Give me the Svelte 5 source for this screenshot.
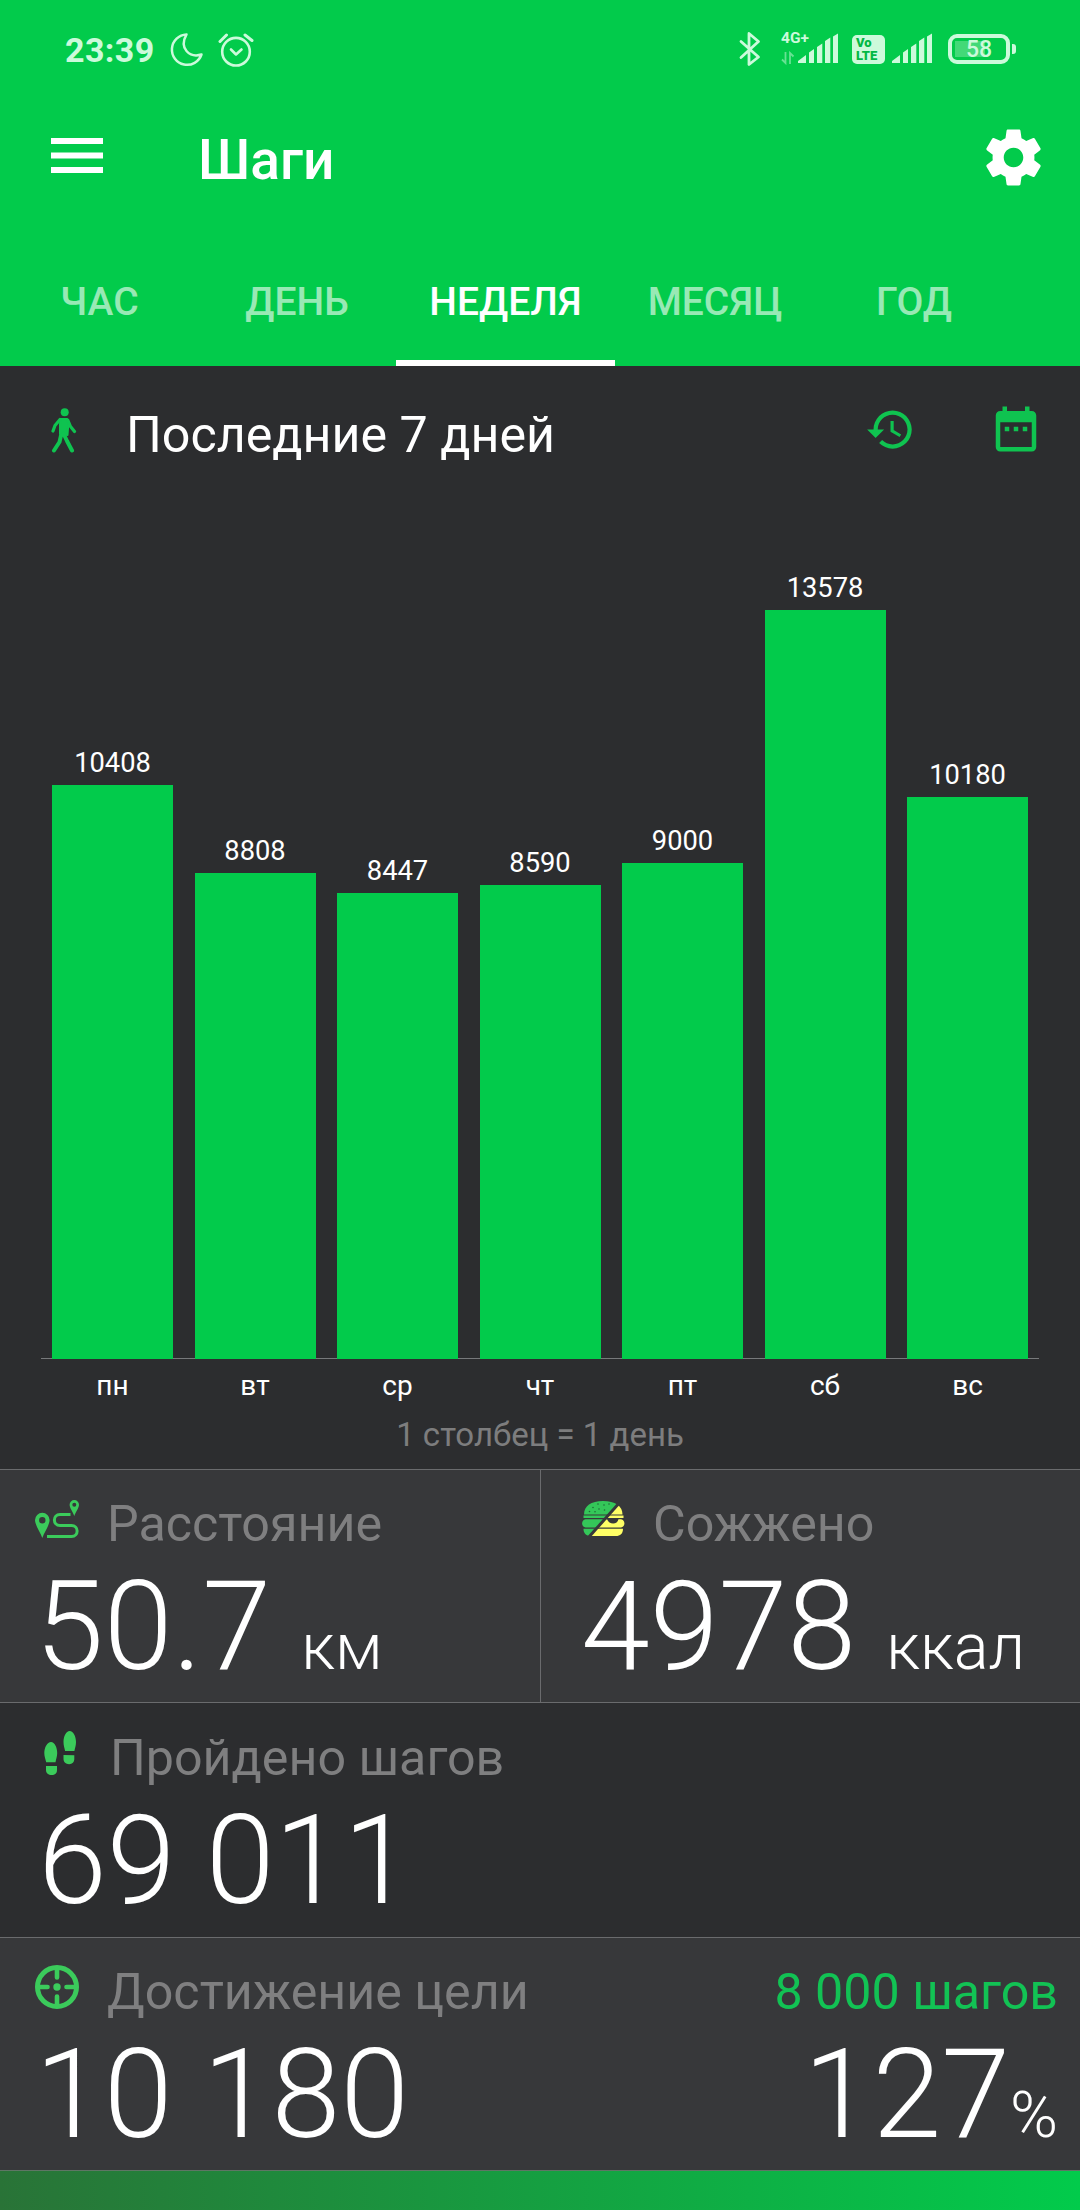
<script lang="ts">
  type Day = { name: string; steps: number };

  const tabs = ['ЧАС', 'ДЕНЬ', 'НЕДЕЛЯ', 'МЕСЯЦ', 'ГОД'];
  let active = $state('НЕДЕЛЯ');

  const days: Day[] = [
    { name: 'пн', steps: 10408 },
    { name: 'вт', steps: 8808 },
    { name: 'ср', steps: 8447 },
    { name: 'чт', steps: 8590 },
    { name: 'пт', steps: 9000 },
    { name: 'сб', steps: 13578 },
    { name: 'вс', steps: 10180 }
  ];

  const maxBar = 749;
  const maxSteps = Math.max(...days.map((d) => d.steps));
  const barHeight = (steps: number) => Math.round((steps / maxSteps) * maxBar);
</script>

{#snippet signal()}
  <svg class="signal" width="40" height="40" viewBox="0 0 40 40" fill="currentColor">
    <path d="M0 33v-2l8-6v8zM11 33V22.500l5-3.500v14zM19 33V17l5.300-3.500V33zM27 33V11l5.300-3.500V33zM35 33V6.500L40 3.500V33z" />
  </svg>
{/snippet}

<div class="screen">
  <header>
    <div class="status">
      <span class="time">23:39</span>
      <svg class="moon" width="34" height="40" viewBox="0 0 34 40" fill="none" stroke="currentColor" stroke-width="2.500" stroke-linejoin="round">
        <path d="M16.500 4.400A15.200 15.200 0 1 0 31.500 24.500C20 28 8.500 19 16.500 4.400z" />
      </svg>
      <svg class="alarm" width="36" height="40" viewBox="0 0 36 40" fill="none" stroke="currentColor" stroke-width="2.600" stroke-linecap="round" stroke-linejoin="round">
        <circle cx="18" cy="21.700" r="13.800" />
        <path d="M13 19.500l5 5 5.500-5" />
        <path d="M2 11.500l6.500-6.500M34 10.500L27 5" stroke-width="3" />
      </svg>
      <svg class="bluetooth" width="22" height="40" viewBox="0 0 22 40" fill="none" stroke="currentColor" stroke-width="2.800" stroke-linecap="round" stroke-linejoin="round">
        <path d="M2 11.500L19.500 27 10 34.500V3.500l9.500 8L2 27.500" />
      </svg>
      <div class="network">
        <span>4G+</span>
        <svg width="14" height="14" viewBox="0 0 14 14" fill="none" stroke="currentColor" stroke-width="1.800">
          <path d="M4.500 1v11L1 8.500M9 13V2l3.500 3.500" />
        </svg>
      </div>
      {@render signal()}
      <div class="volte"><span>Vo</span><span>LTE</span></div>
      {@render signal()}
      <div class="battery"><span>58</span></div>
      <i class="nub"></i>
    </div>

    <div class="appbar">
      <svg class="menu" width="52" height="35" viewBox="0 0 52 35" fill="#fff">
        <path d="M0 0h52v6H0zM0 14.500h52v6H0zM0 29h52v6H0z" />
      </svg>
      <h1>Шаги</h1>
      <svg class="gear" width="67" height="67" viewBox="0 0 24 24" fill="#fff">
        <path d="M19.430 12.980c.04-.32.07-.64.07-.98s-.03-.66-.07-.98l2.110-1.650c.19-.15.24-.42.12-.64l-2-3.460c-.12-.22-.39-.3-.61-.22l-2.490 1c-.52-.4-1.080-.73-1.690-.98l-.38-2.650C14.460 2.180 14.250 2 14 2h-4c-.25 0-.46.18-.49.42l-.38 2.650c-.61.25-1.170.59-1.690.98l-2.490-1c-.23-.09-.49 0-.61.22l-2 3.460c-.13.22-.07.49.12.64l2.110 1.650c-.04.32-.07.65-.07.98s.03.66.07.98l-2.110 1.650c-.19.15-.24.42-.12.64l2 3.460c.12.22.39.3.61.22l2.490-1c.52.4 1.080.73 1.690.98l.38 2.650c.03.24.24.42.49.42h4c.25 0 .46-.18.49-.42l.38-2.650c.61-.25 1.170-.59 1.690-.98l2.490 1c.23.09.49 0 .61-.22l2-3.460c.12-.22.07-.49-.12-.64l-2.110-1.650zM12 15.500c-1.930 0-3.500-1.570-3.500-3.500s1.570-3.500 3.500-3.500 3.500 1.570 3.500 3.500-1.570 3.500-3.500 3.500z" />
      </svg>
    </div>

    <nav>
      {#each tabs as tab (tab)}
        <button class:active={tab === active} onclick={() => (active = tab)}>{tab}</button>
      {/each}
    </nav>
  </header>

  <section class="period">
    <svg class="walk" width="26" height="46" viewBox="0 0 26 46" fill="none" stroke="currentColor" stroke-linecap="round" stroke-linejoin="round">
      <circle cx="13.700" cy="5.200" r="4" fill="currentColor" stroke="none" />
      <path d="M9.500 12h6.800l1.200 3.500-.7 8.500-.3 4-7.500-1V17z" fill="currentColor" stroke-width="2" />
      <path d="M9 12.500L4 18.500 2 24M17 13.500l2.500 6L23.500 24.500" stroke-width="3.200" />
      <path d="M10 28.500L8.500 35 3 43.500M12.500 26.500L16 34l5 9.500" stroke-width="4" />
    </svg>
    <h2>Последние 7 дней</h2>
    <svg class="history" width="51" height="51" viewBox="0 0 24 24" fill="currentColor">
      <path d="M13 3c-4.970 0-9 4.030-9 9H1l3.890 3.890.07.14L9 12H6c0-3.870 3.130-7 7-7s7 3.130 7 7-3.130 7-7 7c-1.930 0-3.680-.79-4.940-2.060l-1.420 1.420C8.270 19.990 10.510 21 13 21c4.970 0 9-4.030 9-9s-4.030-9-9-9zm-1 5v5l4.280 2.540.72-1.210-3.500-2.080V8H12z" />
    </svg>
    <svg class="calendar" width="54" height="54" viewBox="0 0 24 24" fill="currentColor">
      <path d="M9 11H7v2h2v-2zm4 0h-2v2h2v-2zm4 0h-2v2h2v-2zm2-7h-1V2h-2v2H8V2H6v2H5c-1.110 0-1.990.9-1.990 2L3 20c0 1.100.89 2 2 2h14c1.100 0 2-.9 2-2V6c0-1.100-.9-2-2-2zm0 16H5V9h14v11z" />
    </svg>
  </section>

  <section class="chart">
    <div class="plot">
      {#each days as day (day.name)}
        <div class="col">
          <span>{day.steps}</span>
          <div class="bar" style="height: {barHeight(day.steps)}px"></div>
        </div>
      {/each}
    </div>
    <div class="days">
      {#each days as day (day.name)}
        <span>{day.name}</span>
      {/each}
    </div>
    <p class="caption">1 столбец = 1 день</p>
  </section>

  <section class="row alt split">
    <div class="stat">
      <div class="label">
        <svg width="44" height="46" viewBox="0 0 44 46">
          <path fill="currentColor" fill-rule="evenodd" d="M7.300 16.800a7.300 7.300 0 0 1 7.300 7.300c0 5-5.300 12-7.300 18-2-6-7.300-13-7.300-18a7.300 7.300 0 0 1 7.300-7.300zm0 4.200a3.200 3.200 0 1 0 0 6.400 3.200 3.200 0 0 0 0-6.400zM39.300 4a4.700 4.700 0 0 1 4.700 4.700c0 3.300-3.400 7-4.700 11.300-1.300-4.300-4.700-8-4.700-11.300A4.700 4.700 0 0 1 39.300 4zm0 2.700a2 2 0 1 0 0 4 2 2 0 0 0 0-4z" />
          <path fill="none" stroke="currentColor" stroke-width="3" d="M35.500 18.500H25c-7.500 0-7.500 11 0 11h11.500c7.500 0 7.500 11 0 11H12" />
        </svg>
        <span>Расстояние</span>
      </div>
      <div class="value">50.7 <small>км</small></div>
    </div>
    <div class="stat kcal">
      <div class="label">
        <svg width="44" height="46" viewBox="0 0 44 46">
          <defs>
            <clipPath id="fresh"><path d="M0 0h42.500L5 42H0z" /></clipPath>
            <clipPath id="burnt"><path d="M45 1.500V46H5.500z" /></clipPath>
            <g id="burger">
              <path d="M3 18.500C3 10 10 5 22 5s19.500 5 19.500 13.500z" />
              <path d="M2.500 19.600h40v2.400h-40z" />
              <path d="M4.500 23.200h35.500c4.500 1 4.500 7.500 0 8.300H4.500c-4.500-.8-4.500-7.300 0-8.300z" />
              <path d="M2.500 32.700h39.500c0 5-3 7.300-7 7.300H9.500c-4 0-7-2.300-7-7.300z" />
            </g>
          </defs>
          <use href="#burger" fill="#34c759" clip-path="url(#fresh)" />
          <use href="#burger" fill="#ffff66" clip-path="url(#burnt)" />
          <path d="M26 23h11.500c-1 6-9.500 6-11.500 0z" fill="#37383a" />
          <g fill="#1f6b37">
            <circle cx="17" cy="8" r=".8" /><circle cx="23" cy="9" r=".8" /><circle cx="28" cy="8" r=".8" />
            <circle cx="12" cy="11.500" r=".8" /><circle cx="18" cy="13" r=".8" /><circle cx="23.500" cy="14" r=".8" />
            <circle cx="8.500" cy="15.500" r=".8" /><circle cx="14" cy="15.800" r=".8" />
          </g>
        </svg>
        <span>Сожжено</span>
      </div>
      <div class="value">4978 <small>ккал</small></div>
    </div>
  </section>

  <section class="row steps">
    <div class="stat">
      <div class="label">
        <svg width="44" height="46" viewBox="0 0 44 46" fill="currentColor">
          <path d="M16 13c3.600 0 6.200 5.500 6.200 11 0 3.500-1.200 6-1.700 9.200h-9.300C10.500 30 9.300 27.500 9.300 24 9.300 18.500 12.300 13 16 13zM11 37h11v4c0 3.500-2 5-5.300 5S11 44.500 11 41z" />
          <path d="M34.700 2c3.600 0 6.300 5.500 6.300 11 0 3.500-1 6-1.600 9h-9.300c-.6-3-1.600-5.500-1.600-9 0-5.500 2.600-11 6.200-11zM28.500 26l10.800.3v3.500c0 3.500-2 5.400-5.200 5.400s-5.600-2-5.600-5.400z" />
        </svg>
        <span>Пройдено шагов</span>
      </div>
      <div class="value">69 011</div>
    </div>
  </section>

  <section class="row alt">
    <div class="stat">
      <div class="label">
        <svg width="44" height="46" viewBox="0 0 44 46" fill="none" stroke="currentColor">
          <circle cx="22" cy="23" r="19.500" stroke-width="5" />
          <circle cx="22" cy="23" r="3.700" fill="currentColor" stroke="none" />
          <path d="M22 4v9.500M22 32.500V42M3 23h9.500M31.500 23H41" stroke-width="4.600" stroke-linecap="round" />
        </svg>
        <span>Достижение цели</span>
      </div>
      <div class="value">10 180</div>
    </div>
    <div class="goal">
      <div class="label target">8 000 шагов</div>
      <div class="value">127<small>%</small></div>
    </div>
  </section>

  <footer></footer>
</div>

<style>
  :global(body) {
    margin: 0;
    background: #2c2d2f;
  }
  .screen {
    width: 1080px;
    height: 2210px;
    overflow: hidden;
    display: flex;
    flex-direction: column;
    font-family: Roboto, "Liberation Sans", sans-serif;
    color: #fff;
    background: #2c2d2f;
  }
  .screen * {
    box-sizing: border-box;
  }
  svg {
    display: block;
    flex: none;
  }
  h1, h2, p {
    margin: 0;
  }

  header {
    height: 366px;
    background: #02cb4b;
    display: flex;
    flex-direction: column;
  }
  .status {
    display: flex;
    height: 96px;
    padding: 30px 0 26px 65px;
    color: #ccfadb;
  }
  .time {
    width: 105px;
    font-size: 34px;
    line-height: 40px;
    font-weight: 700;
    letter-spacing: 0.4px;
  }
  .alarm {
    margin-left: 14px;
  }
  .bluetooth {
    margin-left: 485px;
  }
  /* the label runs over the short bars of the signal icon */
  .network {
    width: 17px;
    margin-left: 20px;
    padding-top: 3px;
    font-size: 15.5px;
    line-height: 11px;
    font-weight: 700;
    white-space: nowrap;
  }
  .network svg {
    margin-top: 7px;
    opacity: 0.5;
  }
  .volte {
    width: 33px;
    height: 29px;
    margin: 5px 7px 0 14px;
    padding: 2px 0 0 4px;
    border-radius: 5px;
    background: #ccfadb;
    color: #02b845;
    display: flex;
    flex-direction: column;
    font-size: 13px;
    line-height: 12.5px;
    font-weight: 900;
  }
  .battery {
    width: 62px;
    height: 30px;
    margin: 4px 2px 0 16px;
    border: 4px solid #ccfadb;
    border-radius: 9px;
    background: linear-gradient(#43d978, #43d978) 3px 3px / 30px 16px no-repeat;
    text-align: center;
    font-size: 23px;
    line-height: 23px;
    font-weight: 500;
  }
  .nub {
    width: 4px;
    height: 10px;
    margin-top: 14px;
    border-radius: 0 3px 3px 0;
    background: #ccfadb;
  }

  .appbar {
    height: 128px;
    display: flex;
    align-items: center;
    padding: 0 33px 0 51px;
  }
  .menu {
    margin-top: -9px;
  }
  h1 {
    flex: 1;
    padding-left: 95px;
    font-size: 55px;
    line-height: 128px;
    font-weight: 500;
  }
  .gear {
    margin-top: -6px;
  }

  nav {
    height: 142px;
    display: flex;
  }
  button {
    width: 200px;
    padding: 20px 0 0;
    border: 0;
    border-bottom: 6px solid transparent;
    background: none;
    color: rgba(255, 255, 255, 0.6);
    font: 500 39px/116px Roboto, "Liberation Sans", sans-serif;
    text-align: center;
  }
  button:first-child {
    width: 196px;
    padding-left: 3px;
  }
  button:nth-child(2) {
    padding-left: 2px;
  }
  button:last-child {
    width: 198px;
  }
  button.active {
    width: 219px;
    color: #fff;
    border-color: #fff;
  }

  .period {
    height: 138px;
    display: flex;
    padding: 0 37px 0 51px;
    color: #0fc350;
  }
  .walk {
    margin-top: 41px;
  }
  h2 {
    flex: 1;
    padding-left: 49px;
    font-size: 50.2px;
    line-height: 138px;
    font-weight: 400;
    color: #fff;
  }
  .history {
    margin: 38px 73px 0 0;
  }
  .calendar {
    margin-top: 36px;
  }

  .chart {
    height: 965px;
    font-size: 28px;
  }
  .plot {
    height: 855px;
    margin: 0 41px;
    padding: 0 11px;
    border-bottom: 1px solid #77797b;
    display: flex;
    gap: 21.5px;
    align-items: flex-end;
  }
  .col {
    flex: 1;
    margin-bottom: -1px;
    text-align: center;
    font-size: 27.3px;
    line-height: 43px;
  }
  .bar {
    background: #02cb4b;
  }
  .days {
    display: flex;
    gap: 21.5px;
    padding: 0 52px;
    line-height: 53px;
    text-align: center;
  }
  .days span {
    flex: 1;
  }
  .caption {
    font-size: 33px;
    line-height: 45px;
    text-align: center;
    color: #7d7d7e;
  }

  .row {
    height: 233px;
    border-top: 1px solid #6a6b6d;
    display: flex;
    justify-content: space-between;
    color: #3bcb5b;
  }
  .row.alt {
    background: #37383a;
  }
  .row.steps {
    height: 235px;
  }
  .stat {
    padding: 19px 0 0 35px;
  }
  .split .stat {
    width: 540px;
  }
  .split .kcal {
    border-left: 1px solid #6a6b6d;
    padding-left: 40px;
  }
  .label {
    display: flex;
    gap: 28px;
    font-size: 50.2px;
    line-height: 70px;
    color: inherit;
  }
  .label svg {
    margin-top: 7px;
  }
  .label span {
    color: #7f7f80;
  }
  .steps .label {
    gap: 31px;
    line-height: 72px;
  }
  .value {
    font-size: 124px;
    line-height: 135px;
    font-weight: 300;
    font-kerning: none;
    color: #fff;
    white-space: nowrap;
  }
  .steps .value {
    padding-left: 3px;
    line-height: 134px;
  }
  .value small {
    font-size: 65px;
    line-height: 0;
  }
  .goal {
    padding: 19px 22px 0 0;
    text-align: right;
  }
  .target {
    justify-content: flex-end;
    color: #12c254;
  }

  footer {
    flex: 1;
    border-top: 1px solid #5f7565;
    background: linear-gradient(90deg, #297337, #02cb4b);
  }
</style>
